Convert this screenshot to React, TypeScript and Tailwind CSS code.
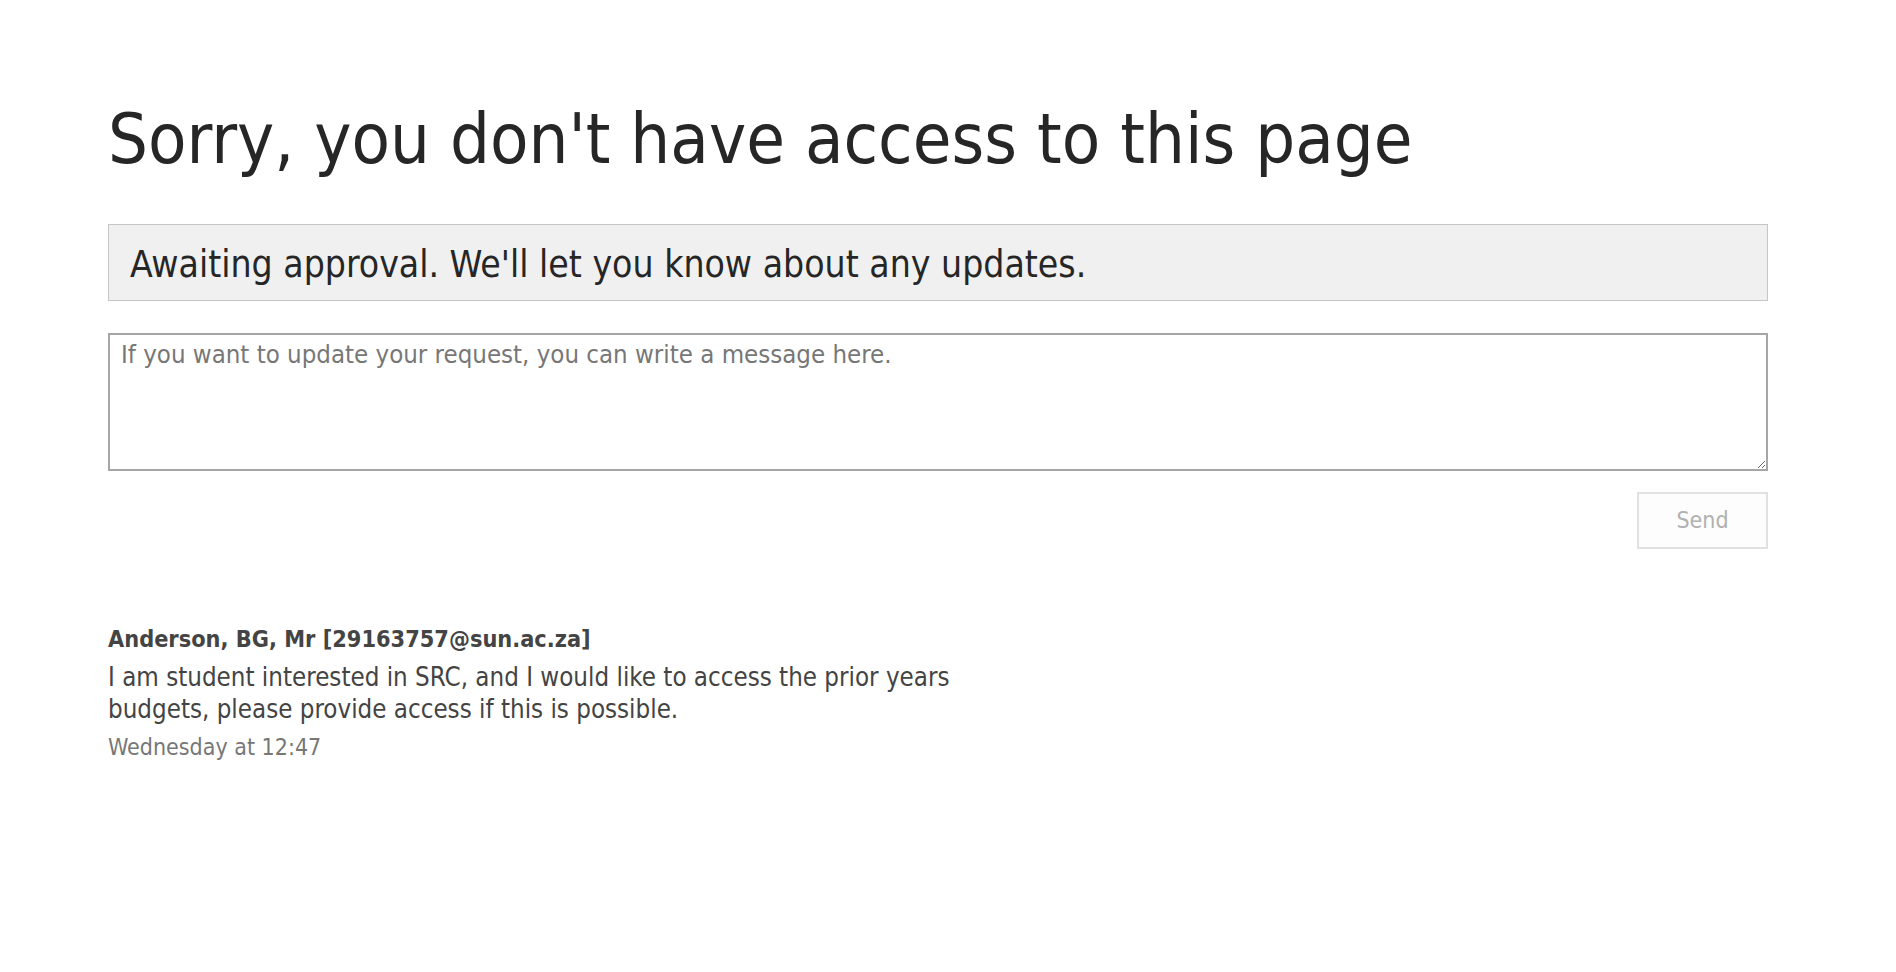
const font = "font-['DejaVu_Sans_Condensed','DejaVu_Sans',sans-serif]";

export default function App() {
  return (
    <div className={`min-h-screen bg-white ${font}`}>
      <div className="ml-[108px] w-[1660px] pt-[98px]">
        <h1 className="text-[70px] leading-[83px] text-[#262626] font-normal">
          Sorry, you don't have access to this page
        </h1>

        <div className="mt-[43px] border border-[#c6c6c6] bg-[#f0f0f0] pl-[21px] pt-[18px] pb-[13px]">
          <p className="text-[37px] leading-[44px] text-[#262626]">
            Awaiting approval. We'll let you know about any updates.
          </p>
        </div>

        <textarea
          placeholder="If you want to update your request, you can write a message here."
          className="mt-[32px] block w-full h-[138px] border-2 border-[#a6a6a6] bg-white pl-[11px] pt-[5px] text-[25.6px] leading-[29px] text-[#262626] placeholder:text-[#777777] outline-none"
        />

        <div className="flex justify-end mt-[21px]">
          <button className="w-[131px] h-[57px] border-2 border-[#e1e1e1] bg-[#fdfdfd] text-[23px] text-[#b1b1b1]">
            Send
          </button>
        </div>

        <div className="mt-[75px]">
          <p className="text-[23.3px] font-bold text-[#444444] leading-[30px]">
            Anderson, BG, Mr [29163757@sun.ac.za]
          </p>
          <p className="mt-[7px] text-[25.7px] leading-[32px] text-[#444444]">
            I am student interested in SRC, and I would like to access the prior years
            <br />
            budgets, please provide access if this is possible.
          </p>
          <p className="mt-[7px] text-[23px] leading-[30px] text-[#777777]">
            Wednesday at 12:47
          </p>
        </div>
      </div>
    </div>
  );
}
